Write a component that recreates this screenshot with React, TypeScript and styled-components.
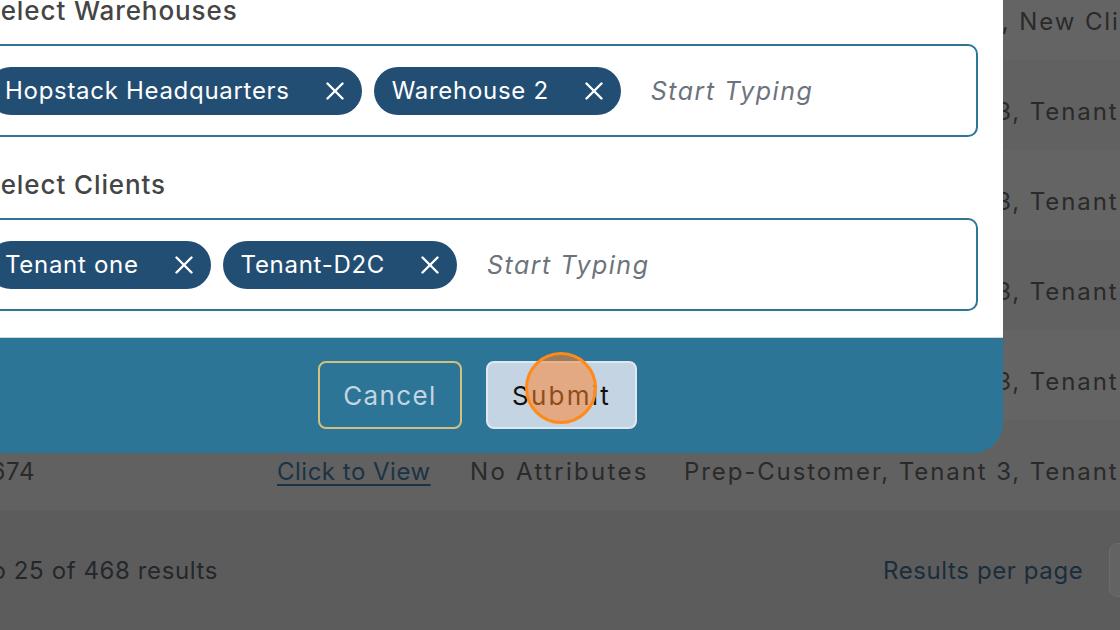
import React from "react";
import styled, { createGlobalStyle } from "styled-components";

const Global = createGlobalStyle`
  html, body { margin: 0; padding: 0; background: #5c5c5c; overflow: hidden; }
  body { font-family: Inter, "Open Sans", "DejaVu Sans", sans-serif; }
  * { box-sizing: border-box; }
`;

const Screen = styled.div`
  position: relative;
  width: 1120px;
  height: 630px;
  overflow: hidden;
  background: #5c5c5c;
`;

const Page = styled.div`
  display: flex;
  flex-direction: column;
`;

const Table = styled.div`
  display: flex;
  flex-direction: column;
  margin-top: -30px;
  margin-left: -37px;
`;

const Row = styled.div<{ $alt: boolean }>`
  display: grid;
  grid-template-columns: 314px 193px 214px max-content;
  align-items: center;
  height: 90px;
  padding-top: 12px;
  background: ${(p) => (p.$alt ? "#616161" : "#646464")};
  font-size: 24px;
  letter-spacing: 1.9px;
  color: #2a2a2a;
  white-space: nowrap;
`;

const IdCell = styled.div`
  width: 72px;
  display: flex;
  justify-content: flex-end;
  letter-spacing: 0.6px;
`;

const LinkCell = styled.span`
  color: #1b3344;
  letter-spacing: 0.5px;
  text-decoration: underline;
  text-underline-offset: 4px;
  text-decoration-thickness: 1.5px;
  justify-self: start;
`;

const Cell = styled.span<{ $wide?: boolean }>`
  letter-spacing: ${(p) => (p.$wide ? "2.3px" : "1.9px")};
`;

const Pager = styled.div`
  display: flex;
  align-items: center;
  height: 120px;
  font-size: 24px;
  letter-spacing: 0.6px;
  white-space: nowrap;
`;

const Summary = styled.div`
  width: 218px;
  flex-shrink: 0;
  display: flex;
  justify-content: flex-end;
  color: #24272b;
`;

const PerPage = styled.div`
  display: flex;
  align-items: center;
  gap: 26px;
  margin-left: 665px;
  flex-shrink: 0;
`;

const PerPageLabel = styled.span`
  color: #1b2c3b;
`;

const PerPageSelect = styled.div`
  width: 120px;
  height: 54px;
  border-radius: 8px;
  background: #636363;
  border: 1px solid #6c6c6c;
  flex-shrink: 0;
`;

const Modal = styled.div`
  position: absolute;
  left: -48px;
  top: -40px;
  width: 1051px;
  border-radius: 0 0 30px 30px;
  overflow: hidden;
  display: flex;
  flex-direction: column;
`;

const ModalBody = styled.div`
  background: #ffffff;
  padding: 36px 25px 26px 25px;
  display: flex;
  flex-direction: column;
  gap: 33px;
`;

const Field = styled.div`
  display: flex;
  flex-direction: column;
  gap: 18px;
`;

const Label = styled.div`
  font-size: 26px;
  line-height: 30px;
  font-weight: 500;
  color: #454545;
  padding-left: 6px;
  letter-spacing: 0.9px;
`;

const ChipBox = styled.div`
  height: 93px;
  border: 2px solid #2f7598;
  border-radius: 10px;
  display: flex;
  align-items: center;
  gap: 12px;
  padding: 0 20px 0 8px;
`;

const Chip = styled.div`
  display: flex;
  align-items: center;
  gap: 36px;
  height: 48px;
  padding: 0 18px;
  border-radius: 24px;
  background: #234e74;
  color: #ffffff;
  font-size: 24px;
  letter-spacing: 0.7px;
  white-space: nowrap;
  flex-shrink: 0;
`;

const ChipX = styled.svg`
  width: 18px;
  height: 18px;
  flex-shrink: 0;
`;

const Placeholder = styled.span`
  margin-left: 18px;
  font-size: 25px;
  font-style: italic;
  color: #6d737d;
  letter-spacing: 1.5px;
  white-space: nowrap;
`;

const ModalFooter = styled.div`
  background: #2d7596;
  border-top: 1px solid #c9d9e4;
  padding: 23px 0 24px;
  display: flex;
  justify-content: center;
  gap: 24px;
`;

const Button = styled.button<{ $primary?: boolean }>`
  position: relative;
  height: 68px;
  width: ${(p) => (p.$primary ? "151px" : "144px")};
  border-radius: 8px;
  font-family: inherit;
  font-size: 26px;
  letter-spacing: ${(p) => (p.$primary ? "2.2px" : "1.4px")};
  cursor: pointer;
  border: 2px solid ${(p) => (p.$primary ? "#dfe7ef" : "#d3bf7e")};
  background: ${(p) => (p.$primary ? "#c5d4e3" : "transparent")};
  color: ${(p) => (p.$primary ? "#111111" : "#c3d4e2")};
  padding: 0;
`;

const ClickMark = styled.span`
  position: absolute;
  left: 37px;
  top: -11px;
  width: 72px;
  height: 72px;
  border-radius: 50%;
  border: 3px solid #ff8a1a;
  background: rgba(255, 130, 40, 0.52);
  pointer-events: none;
`;

const XIcon = () => (
  <ChipX viewBox="0 0 18 18" fill="none" stroke="#ffffff" strokeWidth={2.4} strokeLinecap="round">
    <path d="M1.5 1.5 16.5 16.5" />
    <path d="M16.5 1.5 1.5 16.5" />
  </ChipX>
);

const rows = [
  { id: "10412", clients: "Prep-Customer, Tenants, New Client" },
  { id: "10498", clients: "Prep-Customer, Tenant 3, Tenant 4" },
  { id: "10533", clients: "Prep-Customer, Tenant 3, Tenant 4" },
  { id: "10587", clients: "Prep-Customer, Tenant 3, Tenant 4" },
  { id: "10621", clients: "Prep-Customer, Tenant 3, Tenant 4" },
  { id: "10674", clients: "Prep-Customer, Tenant 3, Tenant 4" },
];

const fields = [
  { label: "Select Warehouses", chips: ["Hopstack Headquarters", "Warehouse 2"] },
  { label: "Select Clients", chips: ["Tenant one", "Tenant-D2C"] },
];

export default function App() {
  return (
    <>
      <Global />
      <Screen>
        <Page>
          <Table>
            {rows.map((r, i) => (
              <Row key={r.id} $alt={i % 2 === 1}>
                <IdCell>{r.id}</IdCell>
                <LinkCell>Click to View</LinkCell>
                <Cell $wide>No Attributes</Cell>
                <Cell>{r.clients}</Cell>
              </Row>
            ))}
          </Table>
          <Pager>
            <Summary>Showing 1 to 25 of 468 results</Summary>
            <PerPage>
              <PerPageLabel>Results per page</PerPageLabel>
              <PerPageSelect />
            </PerPage>
          </Pager>
        </Page>
        <Modal>
          <ModalBody>
            {fields.map((f) => (
              <Field key={f.label}>
                <Label>{f.label}</Label>
                <ChipBox>
                  {f.chips.map((c) => (
                    <Chip key={c}>
                      {c}
                      <XIcon />
                    </Chip>
                  ))}
                  <Placeholder>Start Typing</Placeholder>
                </ChipBox>
              </Field>
            ))}
          </ModalBody>
          <ModalFooter>
            <Button>Cancel</Button>
            <Button $primary>
              Submit
              <ClickMark />
            </Button>
          </ModalFooter>
        </Modal>
      </Screen>
    </>
  );
}
